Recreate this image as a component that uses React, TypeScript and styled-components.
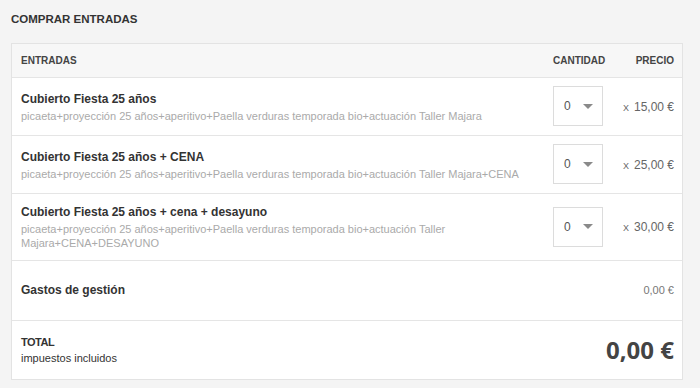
import React from "react";
import styled, { createGlobalStyle } from "styled-components";

const Global = createGlobalStyle`
  html, body { margin: 0; padding: 0; background: #f4f4f4; }
  body { font-family: "Liberation Sans", Arial, sans-serif; color: #333; }
`;

const Page = styled.div`
  padding: 11px 17px 10px 11px;
  width: 700px;
  box-sizing: border-box;
`;

const Title = styled.h2`
  margin: 0 0 16px;
  font-size: 11.5px;
  line-height: 16px;
  font-weight: bold;
  color: #333;
`;

const Card = styled.div`
  background: #fff;
  border: 1px solid #e3e3e3;
`;

const Grid = styled.div`
  display: grid;
  grid-template-columns: 1fr 50px 56px;
  column-gap: 15px;
  align-items: center;
  padding: 0 8px 0 9px;
`;

const HeaderRow = styled(Grid)`
  background: #f7f7f7;
  height: 33px;
  font-size: 10px;
  font-weight: bold;
  color: #444;
`;

const HeadCell = styled.div<{ $align?: string }>`
  text-align: ${(p) => p.$align || "left"};
  white-space: nowrap;
`;

const TicketRow = styled(Grid)`
  border-top: 1px solid #e5e5e5;
  padding-top: 10px;
  padding-bottom: 10px;
`;

const Name = styled.div`
  font-size: 12px;
  line-height: 16px;
  font-weight: bold;
  color: #333;
`;

const Desc = styled.div`
  margin-top: 2px;
  font-size: 11px;
  line-height: 14px;
  color: #aaa;
`;

const Select = styled.div`
  box-sizing: border-box;
  width: 50px;
  height: 40px;
  margin: -2px 0 -1px;
  border: 1px solid #dcdcdc;
  display: flex;
  align-items: center;
  justify-content: space-between;
  padding: 0 9px 0 10px;
  font-size: 12px;
  color: #555;
`;

const Caret = styled.span`
  width: 0;
  height: 0;
  border-left: 5px solid transparent;
  border-right: 5px solid transparent;
  border-top: 5px solid #8a8a8a;
`;

const Price = styled.div`
  text-align: right;
  font-size: 12px;
  color: #666;
  white-space: nowrap;
`;

const Times = styled.span`
  font-size: 9px;
  margin-right: 5px;
`;

const SummaryRow = styled.div<{ $pad: number }>`
  border-top: 1px solid #e5e5e5;
  display: flex;
  align-items: center;
  justify-content: space-between;
  padding: ${(p) => p.$pad}px 8px ${(p) => p.$pad + 1}px 9px;
`;

const Fee = styled.div`
  font-size: 11px;
  color: #777;
`;

const TotalLabel = styled.div`
  font-size: 11px;
  line-height: 16px;
  color: #333;
  strong { font-weight: bold; letter-spacing: -0.5px; }
`;

const TotalValue = styled.div`
  font-family: "Open Sans", "Liberation Sans", sans-serif;
  font-size: 24px;
  font-weight: bold;
  color: #444;
`;

const tickets = [
  {
    name: "Cubierto Fiesta 25 años",
    desc: "picaeta+proyección 25 años+aperitivo+Paella verduras temporada bio+actuación Taller Majara",
    price: "15,00 €",
  },
  {
    name: "Cubierto Fiesta 25 años + CENA",
    desc: "picaeta+proyección 25 años+aperitivo+Paella verduras temporada bio+actuación Taller Majara+CENA",
    price: "25,00 €",
  },
  {
    name: "Cubierto Fiesta 25 años + cena + desayuno",
    desc: "picaeta+proyección 25 años+aperitivo+Paella verduras temporada bio+actuación Taller Majara+CENA+DESAYUNO",
    price: "30,00 €",
  },
];

export default function App() {
  return (
    <Page>
      <Global />
      <Title>COMPRAR ENTRADAS</Title>
      <Card>
        <HeaderRow>
          <HeadCell>ENTRADAS</HeadCell>
          <HeadCell $align="center">CANTIDAD</HeadCell>
          <HeadCell $align="right">PRECIO</HeadCell>
        </HeaderRow>
        {tickets.map((t) => (
          <TicketRow key={t.name}>
            <div>
              <Name>{t.name}</Name>
              <Desc>{t.desc}</Desc>
            </div>
            <Select>
              <span>0</span>
              <Caret />
            </Select>
            <Price>
              <Times>X</Times>
              {t.price}
            </Price>
          </TicketRow>
        ))}
        <SummaryRow $pad={21}>
          <Name>Gastos de gestión</Name>
          <Fee>0,00 €</Fee>
        </SummaryRow>
        <SummaryRow $pad={12}>
          <TotalLabel>
            <strong>TOTAL</strong>
            <div>impuestos incluidos</div>
          </TotalLabel>
          <TotalValue>0,00 €</TotalValue>
        </SummaryRow>
      </Card>
    </Page>
  );
}
